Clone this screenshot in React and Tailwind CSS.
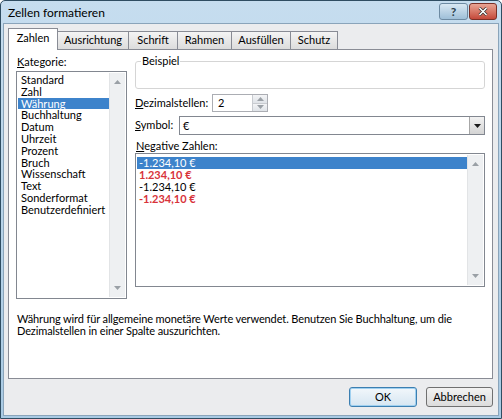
import React from "react";

const font = { fontFamily: 'Lato, "Noto Sans", sans-serif' };

const categories = [
  "Standard",
  "Zahl",
  "Währung",
  "Buchhaltung",
  "Datum",
  "Uhrzeit",
  "Prozent",
  "Bruch",
  "Wissenschaft",
  "Text",
  "Sonderformat",
  "Benutzerdefiniert",
];

const tabs = [
  { label: "Ausrichtung", w: "w-[72px]" },
  { label: "Schrift", w: "w-[50px]" },
  { label: "Rahmen", w: "w-[55px]" },
  { label: "Ausfüllen", w: "w-[60px]" },
  { label: "Schutz", w: "w-[48px]" },
];

const Arrow = ({ down, dark }) => (
  <svg width="7" height="4" viewBox="0 0 7 4">
    <path
      d={down ? "M0 0 L7 0 L3.5 4 Z" : "M0 4 L7 4 L3.5 0 Z"}
      fill={dark ? "#1a1a1a" : "#9aa0a6"}
    />
  </svg>
);

const Scrollbar = () => (
  <div className="w-[16px] h-full bg-[#eef0f2] border-l border-[#e2e4e6] flex flex-col justify-between items-center py-[7px]">
    <Arrow />
    <Arrow down />
  </div>
);

export default function App() {
  return (
    <div
      style={font}
      className="w-[502px] h-[419px] flex flex-col bg-gradient-to-b from-[#c6ddef] to-[#a9cae3] border border-[#2f4d62] rounded-t-[5px] px-[2px] pb-[2px] text-[11px] text-black overflow-hidden"
    >
      {/* title bar */}
      <div className="h-[22px] flex items-start justify-between">
        <span className="pl-[5px] pt-[5px] text-[12px] leading-[14px] text-black">Zellen formatieren</span>
        <div className="flex mr-[2px] mt-[2px]">
          <div className="w-[29px] h-[17px] rounded-[3px] border border-[#6d8aa2] bg-gradient-to-b from-[#d9e8f3] to-[#9ebfd8] flex items-center justify-center text-[12px] font-bold text-[#2d3f4d] leading-none">
            ?
          </div>
          <div className="w-[28px] h-[17px] ml-[1px] rounded-[3px] border border-[#7a3027] bg-gradient-to-b from-[#e8a494] to-[#c4483a] flex items-center justify-center">
            <svg width="10" height="9" viewBox="0 0 10 9">
              <path d="M1.5 1 L8.5 8 M8.5 1 L1.5 8" stroke="#2d2d2d" strokeWidth="3" />
              <path d="M1.5 1 L8.5 8 M8.5 1 L1.5 8" stroke="#fff" strokeWidth="1.6" />
            </svg>
          </div>
        </div>
      </div>

      {/* body */}
      <div className="flex-1 bg-[#ebecee] border border-[#8aa4ba] flex flex-col px-[4px] pt-[4px]">
        {/* tabs */}
        <div className="flex items-end h-[22px] relative z-10">
          <div className="w-[50px] h-[22px] bg-white border border-b-0 border-[#898c95] flex items-center justify-center pb-[2px]">
            Zahlen
          </div>
          {tabs.map((t) => (
            <div
              key={t.label}
              className={`${t.w} h-[19px] -ml-px first:ml-0 bg-gradient-to-b from-[#f4f4f4] to-[#dcdcdc] border border-[#898c95] flex items-center justify-center`}
            >
              {t.label}
            </div>
          ))}
        </div>

        {/* panel */}
        <div className="w-[485px] h-[330px] -mt-px bg-white border border-[#898c95] flex flex-col px-[7px] pt-[5px]">
          <div className="flex gap-[8px]">
            {/* left column */}
            <div className="flex flex-col w-[111px]">
              <div className="leading-[14px] h-[16px] pl-[1px]">
                <span className="underline">K</span>ategorie:
              </div>
              <div className="h-[228px] border border-[#828790] flex p-px">
                <div className="flex-1 flex flex-col pt-px">
                  {categories.map((c) => (
                    <div
                      key={c}
                      className={`h-[11.8px] leading-[11.8px] pl-[3px] ${
                        c === "Währung" ? "bg-[#3d83cb] text-white" : ""
                      }`}
                    >
                      {c}
                    </div>
                  ))}
                </div>
                <Scrollbar />
              </div>
            </div>

            {/* right column */}
            <div className="flex flex-col w-[350px]">
              <fieldset className="h-[34px] border border-[#d5d5d5] rounded-[3px] px-[5px]">
                <legend className="px-[1px] leading-[12px] -mb-[3px]">Beispiel</legend>
              </fieldset>

              <div className="flex items-center mt-[5px] h-[18px]">
                <span className="w-[77px]">
                  <span className="underline">D</span>ezimalstellen:
                </span>
                <div className="w-[56px] h-[18px] border border-[#abadb3] bg-white flex">
                  <span className="flex-1 pl-[5px] leading-[16px]">2</span>
                  <div className="w-[15px] flex flex-col border-l border-[#c8cbd0]">
                    <div className="flex-1 bg-gradient-to-b from-[#f3f4f6] to-[#dfe3e8] border-b border-[#c8cbd0] flex items-center justify-center">
                      <Arrow />
                    </div>
                    <div className="flex-1 bg-gradient-to-b from-[#f3f4f6] to-[#dfe3e8] flex items-center justify-center">
                      <Arrow down />
                    </div>
                  </div>
                </div>
              </div>

              <div className="flex items-center mt-[4px] h-[19px]">
                <span className="w-[44px]">
                  <span className="underline">S</span>ymbol:
                </span>
                <div className="flex-1 h-[19px] border border-[#828790] bg-white flex">
                  <span className="flex-1 pl-[3px] leading-[17px]">€</span>
                  <div className="w-[15px] bg-gradient-to-b from-[#f2f2f2] to-[#d4d4d4] border-l border-[#a7a7a7] flex items-center justify-center">
                    <Arrow down dark />
                  </div>
                </div>
              </div>

              <div className="leading-[12px] mt-[5px] h-[13px] pl-[1px]">
                <span className="underline">N</span>egative Zahlen:
              </div>
              <div className="h-[134px] border border-[#828790] flex p-px">
                <div className="flex-1 flex flex-col pt-[2px]">
                  <div className="h-[12px] leading-[12px] pl-[2px] bg-[#3d83cb] text-white">-1.234,10 €</div>
                  <div className="h-[12px] leading-[12px] pl-[2px] text-[#d8333a] font-bold">1.234,10 €</div>
                  <div className="h-[12px] leading-[12px] pl-[2px]">-1.234,10 €</div>
                  <div className="h-[12px] leading-[12px] pl-[2px] text-[#d8333a] font-bold">-1.234,10 €</div>
                </div>
                <Scrollbar />
              </div>
            </div>
          </div>

          <p className="mt-[14px] leading-[12px] pl-px whitespace-nowrap tracking-[-0.12px]">
            Währung wird für allgemeine monetäre Werte verwendet. Benutzen Sie Buchhaltung, um die
            <br />
            Dezimalstellen in einer Spalte auszurichten.
          </p>
        </div>

        {/* buttons */}
        <div className="flex justify-end gap-[9px] mt-[8px] w-[485px]">
          <div className="w-[68px] h-[20px] rounded-[3px] border border-[#3c7fb1] bg-gradient-to-b from-[#f2f7fb] to-[#d6e6f2] flex items-center justify-center shadow-[inset_0_0_0_1px_#9fd0f0]">
            OK
          </div>
          <div className="w-[67px] h-[20px] rounded-[3px] border border-[#707070] bg-gradient-to-b from-[#f2f2f2] to-[#dcdcdc] flex items-center justify-center">
            Abbrechen
          </div>
        </div>
      </div>
    </div>
  );
}
